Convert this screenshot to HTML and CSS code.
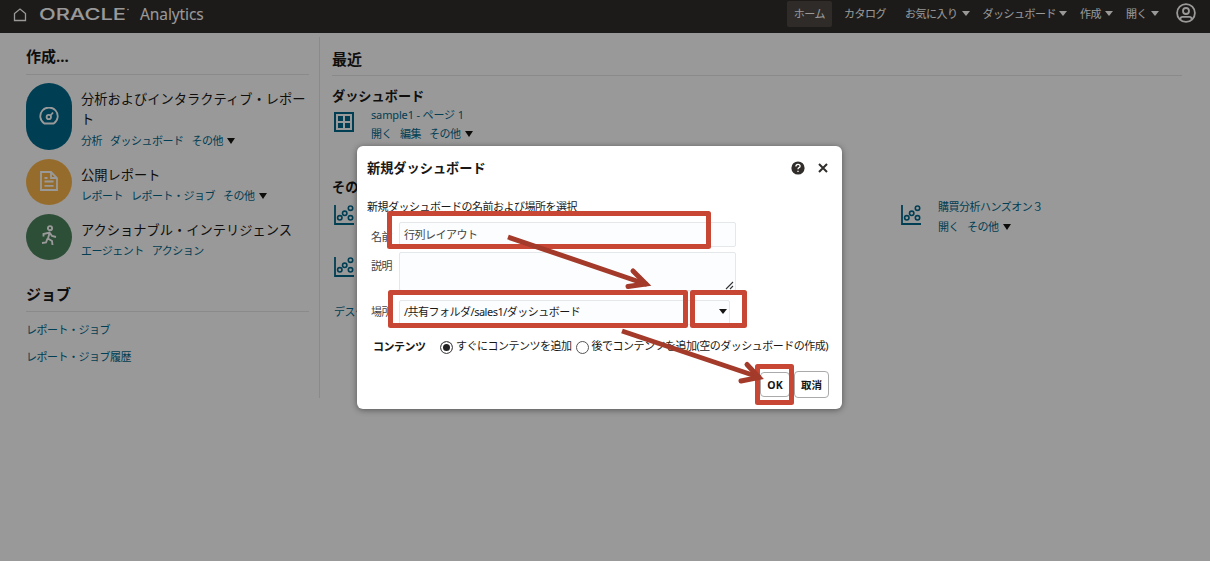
FILE: index.html
```html
<!DOCTYPE html>
<html lang="ja">
<head>
  <meta charset="UTF-8" />
  <meta name="viewport" content="width=device-width, initial-scale=1.0"/>
  <title>Oracle Analytics</title>
  <link rel="stylesheet" href="styles.css">
</head>
<body>
  <svg class="defs" width="0" height="0">
    <symbol id="scatter" viewBox="0 0 20 20">
      <g fill="none" stroke="#00688c">
        <path d="M1 0V19H20" stroke-width="1.8"/>
        <circle cx="5.8" cy="12.8" r="2.2" stroke-width="1.6"/>
        <circle cx="10.7" cy="8.3" r="2.2" stroke-width="1.6"/>
        <circle cx="16.5" cy="3.2" r="2.2" stroke-width="1.6"/>
        <circle cx="16.5" cy="12.8" r="2.2" stroke-width="1.6"/>
      </g>
    </symbol>
  </svg>

  <header class="header">
    <svg class="home" width="14" height="14" viewBox="0 0 14 14"><path d="M1.500 12.500V5.500L7 1l5.500 4.500v7z" fill="none" stroke="#fff" stroke-width="1.3"/></svg>
    <svg class="logo" width="93" height="24" viewBox="0 0 93 24">
      <text x="0" y="18" textLength="87" lengthAdjust="spacingAndGlyphs">ORACLE</text>
      <circle cx="89" cy="7.5" r="0.8" fill="#fff"/>
    </svg>
    <span class="product">Analytics</span>
    <nav class="nav">
      <a class="active">ホーム</a>
      <a class="catalog">カタログ</a>
      <a class="favorite">お気に入り<i class="caret"></i></a>
      <a class="dash">ダッシュボード<i class="caret"></i></a>
      <a class="create">作成<i class="caret"></i></a>
      <a class="open">開く<i class="caret"></i></a>
    </nav>
    <svg class="user" width="20" height="20" viewBox="0 0 20 20">
      <g fill="none" stroke="#fff" stroke-width="1.8">
        <circle cx="10" cy="10" r="8.9"/>
        <circle cx="10" cy="8" r="3"/>
        <path d="M4.500 16.500v-.8q0-1.900 2-1.900h7q2 0 2 1.900v.8"/>
      </g>
    </svg>
  </header>

  <div class="page">
    <aside class="sidebar">
      <h2>作成...</h2>
      <div class="item tall">
        <div class="badge blue">
          <svg width="20" height="18" viewBox="0 0 20 18">
            <g fill="none" stroke="#fff" stroke-width="1.8">
              <path d="M5.300 16.500a8.700 8.700 0 1 1 9.400 0z"/>
              <circle cx="9.800" cy="10" r="2.2"/>
              <path d="M11.500 8.500L14 5.500"/>
            </g>
          </svg>
        </div>
        <div>
          <h3>分析およびインタラクティブ・レポート</h3>
          <p><a>分析</a><a>ダッシュボード</a><a>その他</a><i class="caret"></i></p>
        </div>
      </div>
      <div class="item">
        <div class="badge orange">
          <svg width="18" height="20" viewBox="0 0 18 20">
            <g fill="none" stroke="#fff" stroke-width="1.8">
              <path d="M1 1h10l6 6v12H1z"/>
              <path d="M11 1v6h6M4.500 10.500h9M4.500 14.800h9M4.500 7h3"/>
            </g>
          </svg>
        </div>
        <div>
          <h3>公開レポート</h3>
          <p><a>レポート</a><a>レポート・ジョブ</a><a>その他</a><i class="caret"></i></p>
        </div>
      </div>
      <div class="item">
        <div class="badge green">
          <svg width="18" height="22" viewBox="0 0 18 22">
            <g fill="none" stroke="#fff" stroke-width="1.9">
              <circle cx="10" cy="3.200" r="2.1"/>
              <path d="M3.500 11.500V9l6-1.500L12 11l4 1M9.500 8L8 13.500l4 2.500 .5 4M7.500 13.500l-1.500 4-4 .5"/>
            </g>
          </svg>
        </div>
        <div>
          <h3>アクショナブル・インテリジェンス</h3>
          <p><a>エージェント</a><a>アクション</a></p>
        </div>
      </div>
      <h2 class="jobs">ジョブ</h2>
      <ul>
        <li><a>レポート・ジョブ</a></li>
        <li><a>レポート・ジョブ履歴</a></li>
      </ul>
    </aside>

    <main class="main">
      <h2>最近</h2>
      <h4>ダッシュボード</h4>
      <div class="grid">
        <div class="entry">
          <svg width="20" height="20" viewBox="0 0 20 20">
            <path d="M1 1h18v18H1z" fill="none" stroke="#00688c" stroke-width="2"/>
            <path d="M4 4h5v5H4zM11 4h5v5h-5zM4 11h5v5H4zM11 11h5v5h-5z" fill="#00688c"/>
          </svg>
          <div>
            <a class="name sample">sample1 - ページ 1</a>
            <p><a>開く</a><a>編集</a><a>その他</a><i class="caret"></i></p>
          </div>
        </div>
      </div>
      <h4 class="others">その他</h4>
      <div class="grid rows">
        <div class="entry"><svg width="20" height="20"><use href="#scatter"/></svg></div>
        <div class="entry last">
          <svg width="20" height="20"><use href="#scatter"/></svg>
          <div>
            <a class="name">購買分析ハンズオン３</a>
            <p><a>開く</a><a>その他</a><i class="caret"></i></p>
          </div>
        </div>
        <div class="entry"><svg width="20" height="20"><use href="#scatter"/></svg></div>
      </div>
      <a class="desktop">デスク</a>
    </main>
  </div>

  <div class="overlay"></div>

  <div class="dialog">
    <div class="title">
      <h1>新規ダッシュボード</h1>
      <svg width="14" height="14" viewBox="0 0 14 14">
        <circle cx="7" cy="7" r="6.6" fill="#312d2a"/>
        <path d="M4.900 5.500q0-2.200 2.100-2.200t2.100 1.900q0 1-1.100 1.500t-1 1.600M7 9.700v1.400" fill="none" stroke="#fff" stroke-width="1.3"/>
      </svg>
      <svg class="close" width="10" height="10" viewBox="0 0 10 10"><path d="M1 1l8 8M9 1L1 9" stroke="#312d2a" stroke-width="2"/></svg>
    </div>
    <p class="intro">新規ダッシュボードの名前および場所を選択</p>
    <div class="row name-row">
      <label>名前</label>
      <div class="field">行列レイアウト</div>
    </div>
    <div class="row desc-row">
      <label>説明</label>
      <div class="field">
        <svg class="grip" width="9" height="9" viewBox="0 0 9 9"><path d="M1 8l7-7M5 8l3-3" stroke="#333" stroke-width="1.1"/></svg>
      </div>
    </div>
    <div class="row place-row">
      <label>場所</label>
      <div class="field"><span>/共有フォルダ/sales1/ダッシュボード</span><i class="caret"></i></div>
    </div>
    <div class="content">
      <b>コンテンツ</b>
      <i class="radio checked"></i><span>すぐにコンテンツを追加</span>
      <i class="radio"></i><span>後でコンテンツを追加(空のダッシュボードの作成)</span>
    </div>
    <div class="buttons">
      <button class="ok">OK</button>
      <button class="cancel">取消</button>
    </div>
  </div>

  <!-- step callouts -->
  <svg class="callouts" width="1210" height="561" viewBox="0 0 1210 561">
    <g fill="none" stroke="#c74634" stroke-width="5" stroke-linejoin="round">
      <rect x="389.500" y="213.500" width="319" height="33"/>
      <rect x="390.500" y="292.500" width="295" height="33"/>
      <rect x="692.500" y="292.500" width="52" height="33"/>
      <rect x="757.500" y="366.500" width="34" height="36"/>
    </g>
    <g fill="none" stroke="#a33a2a" stroke-width="5">
      <path d="M508 237L647 284.500"/>
      <path d="M622 331L760 377.500"/>
      <g stroke-linecap="round">
        <path d="M633 271L646 284L628 286.500"/>
        <path d="M747 364.500L759 377.500L741 381"/>
      </g>
    </g>
  </svg>
</body>
</html>
```
FILE: styles.css
```css
* {
  box-sizing: border-box;
}

body {
  margin: 0;
  height: 561px;
  overflow: hidden;
  position: relative;
  background: #fff;
  color: #1a1816;
  font-family: "Noto Sans", "Noto Sans CJK JP", sans-serif;
  font-size: 11px;
  letter-spacing: -0.5px;
  line-height: 16px;
}

h1, h2, h3, h4, p, ul {
  margin: 0;
  padding: 0;
}

h1, h2, h3, h4 {
  letter-spacing: 0;
}

.defs {
  position: absolute;
}

svg {
  display: block;
  flex: none;
}

a {
  color: #00688c;
  white-space: nowrap;
}

.caret {
  display: inline-block;
  border: 4.5px solid transparent;
  border-top: 6px solid #161513;
  border-bottom: 0;
}

/* header */
.header {
  display: flex;
  align-items: flex-start;
  height: 33px;
  padding-left: 13px;
  background: #312d2a;
}

.home {
  margin-top: 8px;
}

.logo {
  margin: 2px 0 0 12px;
}

.logo text {
  font-family: Inter, sans-serif;
  font-size: 16px;
  font-weight: 500;
  letter-spacing: 0;
  fill: #fff;
}

.product {
  margin: 4px 0 0 8px;
  color: #fff;
  font-size: 15.5px;
  letter-spacing: -0.1px;
  line-height: 20px;
}

.nav {
  display: flex;
  margin: 1px 0 0 auto;
}

.nav a {
  color: #fff;
  line-height: 26px;
}

.nav .active {
  padding: 0 7px;
  border-radius: 2px;
  background: #4d4945;
}

.nav .catalog {
  margin: 0 19px 0 12px;
}

.nav .caret {
  margin-left: 4px;
  border-width: 5px 4px 0;
  border-top-color: #fff;
  vertical-align: 2px;
}

.nav .favorite {
  margin-right: 13px;
}

.nav .dash,
.nav .create {
  margin-right: 13px;
}

.nav .dash .caret {
  margin-left: 3px;
}

.user {
  margin: 3px 14px 0 17px;
}

/* page */
.page {
  display: flex;
}

h2 {
  font-size: 15px;
  line-height: 20px;
  font-weight: 700;
  border-bottom: 1px solid #e6e6e6;
}

h3 {
  font-size: 13.25px;
  line-height: 20px;
  font-weight: 400;
}

h4 {
  font-size: 13.2px;
  line-height: 18px;
}

.sidebar {
  width: 320px;
  height: 361px;
  margin-top: 4px;
  padding: 9px 10px 0 26px;
  border-right: 1px solid #e6e6e6;
}

.sidebar h2 {
  padding-bottom: 8px;
  margin-bottom: 8px;
}

.item {
  display: flex;
  gap: 9px;
  height: 46px;
  margin-bottom: 9px;
}

.item.tall {
  height: 67px;
}

.badge {
  display: flex;
  flex: none;
  align-items: center;
  justify-content: center;
  width: 46px;
  border-radius: 23px;
}

.badge svg {
  margin-bottom: 3px;
}

.badge.blue {
  background: #00688c;
}

.badge.blue svg {
  margin-bottom: 2px;
}

.badge.orange {
  background: #fbb54a;
}

.badge.green {
  background: #4c825c;
}

.item h3 {
  padding-top: 6px;
}

.item p {
  padding-top: 3px;
  white-space: nowrap;
}

.item.tall p {
  padding-top: 4px;
}

.item p a,
.entry p a {
  margin-right: 8px;
}

p .caret {
  margin-left: -4px;
  vertical-align: 1px;
}

.sidebar .jobs {
  margin-top: 24px;
  margin-bottom: 10px;
  padding-bottom: 7px;
}

.sidebar ul {
  list-style: none;
}

.sidebar li {
  height: 27px;
}

.main {
  width: 862px;
  padding: 16px 0 0 12px;
}

.main h2 {
  padding-bottom: 6px;
  margin-bottom: 11px;
}

.grid {
  display: grid;
  grid-template-columns: repeat(3, 283.5px);
  padding-left: 2px;
}

.entry {
  display: flex;
  gap: 17px;
}

.entry svg {
  margin-top: 7px;
}

.entry .name {
  display: block;
  line-height: 20px;
}

.entry .sample {
  letter-spacing: -0.15px;
}

.entry p {
  padding-top: 1px;
}

.main .others {
  margin-top: 36px;
}

.rows {
  grid-auto-rows: 52px;
  margin-top: 1px;
}

.rows svg {
  margin-top: 8px;
}

.rows p {
  padding-top: 2px;
}

.entry.last {
  grid-column: 3;
}

.desktop {
  display: block;
  padding: 3px 0 0 2px;
}

.overlay {
  position: absolute;
  inset: 0;
  background: rgba(0, 0, 0, 0.4);
}

/* dialog */
.dialog {
  position: absolute;
  left: 357px;
  top: 146px;
  width: 485px;
  height: 263px;
  padding: 11px 12px 0 10px;
  border-radius: 6px;
  background: #fff;
  box-shadow: 0 1px 6px rgba(0, 0, 0, 0.45);
}

.title {
  display: flex;
  align-items: center;
  height: 22px;
}

.title h1 {
  margin-right: auto;
  font-size: 13.2px;
}

.title .close {
  margin: 0 2px 0 13px;
}

.intro {
  margin-top: 20px;
}

.row {
  display: flex;
  padding-left: 4px;
}

.row label {
  width: 28px;
  color: #444;
}

.field {
  display: flex;
  width: 337px;
  padding: 0 4px;
  border: 1px solid #e4e8ea;
  border-radius: 2px;
  background: #fbfdff;
}

.name-row {
  margin-top: 7px;
}

.name-row .field {
  height: 25px;
  line-height: 24px;
  color: #444;
}

.name-row label {
  padding-top: 7px;
}

.desc-row {
  margin-top: 5px;
}

.desc-row .field {
  height: 39px;
  align-items: flex-end;
  justify-content: flex-end;
  padding: 0 1px 0;
}

.desc-row label {
  padding-top: 6px;
}

.place-row {
  margin-top: 9px;
}

.place-row .field {
  width: 331px;
  height: 25px;
  align-items: center;
  justify-content: space-between;
  padding-right: 2px;
  padding-bottom: 2px;
}

.place-row .caret {
  border-width: 5px 4px 0;
}

.place-row label {
  padding-top: 4px;
}

.content {
  display: flex;
  align-items: center;
  height: 16px;
  margin-top: 13px;
  padding-left: 6px;
  white-space: nowrap;
}

.content > * {
  flex: none;
}

.content b {
  width: 67px;
  padding-top: 2px;
}

.radio {
  width: 13px;
  height: 13px;
  margin: 2px 3px 0 0;
  border: 1px solid #555;
  border-radius: 50%;
  background: #fff;
}

.radio.checked {
  background: #222;
  box-shadow: inset 0 0 0 2px #fff;
}

.content span {
  margin-right: 4px;
}

.buttons {
  display: flex;
  align-items: center;
  justify-content: flex-end;
  gap: 4px;
  margin: 17px 1px 0 0;
}

button {
  height: 27px;
  padding: 0;
  border: 1px solid #aaa;
  border-radius: 4px;
  background: #fff;
  color: #161513;
  font: 700 10.5px/16px "Noto Sans", "Noto Sans CJK JP", sans-serif;
}

.ok {
  width: 30px;
  height: 25px;
}

.cancel {
  width: 35px;
}

.callouts {
  position: absolute;
  left: 0;
  top: 0;
}
```
